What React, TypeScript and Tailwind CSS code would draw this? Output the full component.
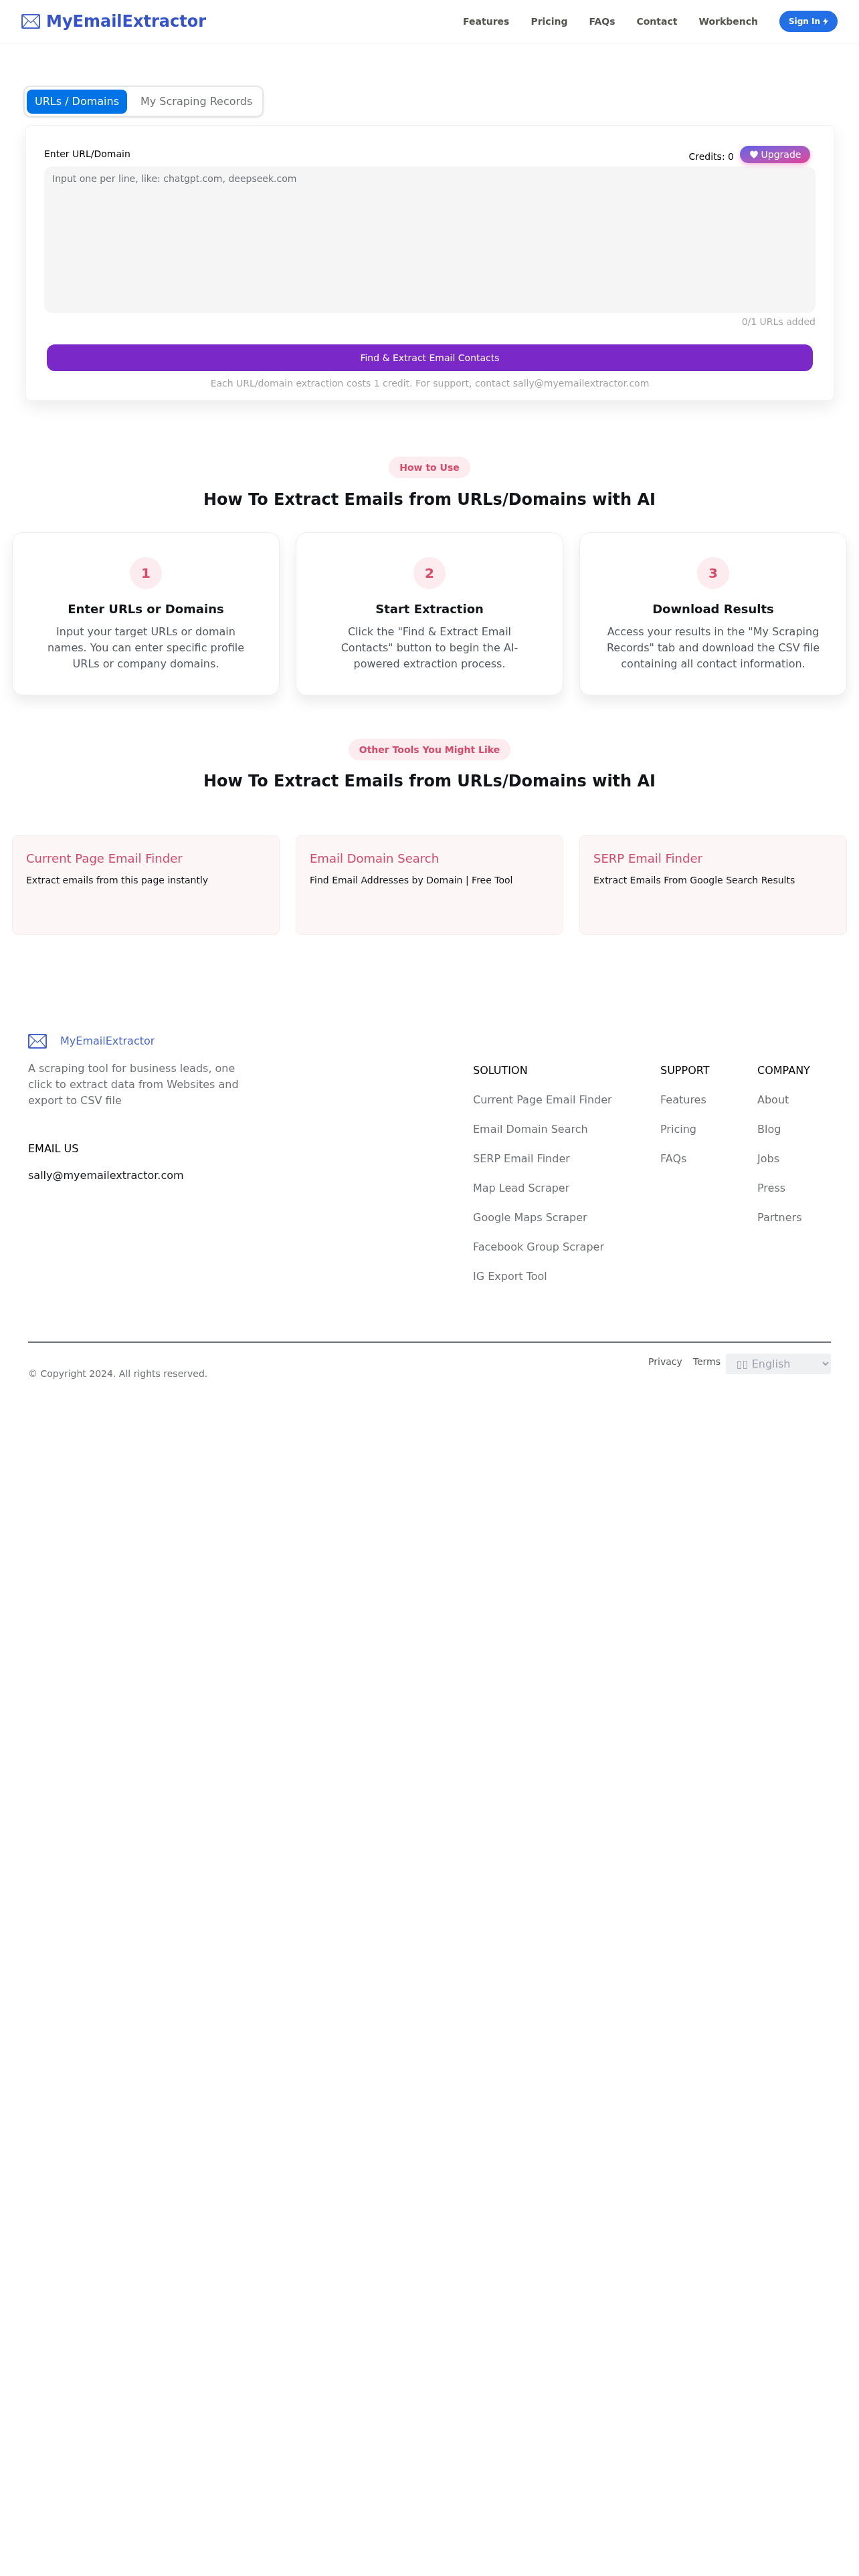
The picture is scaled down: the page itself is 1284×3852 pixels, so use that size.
import React from "react";

const steps = [
	{
		n: "1",
		title: "Enter URLs or Domains",
		lines: ["Input your target URLs or domain", "names. You can enter specific profile", "URLs or company domains."],
	},
	{
		n: "2",
		title: "Start Extraction",
		lines: ['Click the "Find & Extract Email', 'Contacts" button to begin the AI-', "powered extraction process."],
	},
	{
		n: "3",
		title: "Download Results",
		lines: ['Access your results in the "My Scraping', 'Records" tab and download the CSV file', "containing all contact information."],
	},
];

const tools = [
	{ title: "Current Page Email Finder", text: "Extract emails from this page instantly" },
	{ title: "Email Domain Search", text: "Find Email Addresses by Domain | Free Tool" },
	{ title: "SERP Email Finder", text: "Extract Emails From Google Search Results" },
];

const solution = [
	"Current Page Email Finder",
	"Email Domain Search",
	"SERP Email Finder",
	"Map Lead Scraper",
	"Google Maps Scraper",
	"Facebook Group Scraper",
	"IG Export Tool",
];

function MailIcon({ className }: { className: string }) {
	return (
		<svg viewBox="0 0 28 22" fill="none" stroke="#4463cc" className={className}>
			<rect x="1" y="1" width="26" height="20" rx="1" strokeWidth="2" />
			<path d="M1.500 1.500 14 13 26.500 1.500M1.500 20.500 10.500 9.500M26.500 20.500 17.500 9.500" strokeWidth="1.200" />
		</svg>
	);
}

function Column({ title, links, className }: { title: string; links: string[]; className: string }) {
	return (
		<div className={className}>
			<p className="text-base leading-6 text-black mb-5">{title}</p>
			<ul className="flex flex-col gap-5">
				{links.map((l) => (
					<li key={l} className="text-base leading-6 text-[#6e7177]">
						{l}
					</li>
				))}
			</ul>
		</div>
	);
}

export default function App() {
	return (
		<div className="w-full bg-white font-['DejaVu_Sans',sans-serif] text-[#12161a] will-change-transform">
			<nav className="h-[65px] border-b border-[#f3f3f3] flex items-center justify-between px-8">
				<div className="flex items-center gap-[9px]">
					<MailIcon className="w-7 h-[22px]" />
					<span className="text-2xl font-bold text-[#3453cc]">MyEmailExtractor</span>
				</div>
				<div className="flex items-center gap-8 text-sm font-bold text-[#57534e]">
					<span>Features</span>
					<span>Pricing</span>
					<span>FAQs</span>
					<span>Contact</span>
					<span>Workbench</span>
					<button className="h-8 w-[87px] rounded-full bg-[#2370e6] text-white text-xs font-bold flex items-center justify-center gap-1">
						Sign In
						<svg viewBox="0 0 10 14" className="w-2 h-3 fill-white">
							<path d="M6 0 0 8h4l-1 6 7-9H5.500z" />
						</svg>
					</button>
				</div>
			</nav>

			<main className="pl-[38px] pr-[37px] pt-[63px]">
				<div className="flex w-fit items-center h-[47px] px-[3px] border-2 border-[#e5e5e5] rounded-[10px] -ml-[3px] shadow-sm">
					<div className="h-9 w-[150px] rounded-lg bg-[#0073e6] text-white flex items-center justify-center text-base">
						URLs / Domains
					</div>
					<div className="pl-5 pr-3 text-base text-[#6e7177]">My Scraping Records</div>
				</div>

				<section className="mt-3 h-[412px] rounded-lg bg-white border border-[#f3f3f3] shadow-[0_10px_25px_rgba(0,0,0,0.08)] px-[27px] pt-[29px]">
					<div className="flex items-start justify-between h-[32px]">
						<label className="text-sm leading-6 text-black mt-[1px]">Enter URL/Domain</label>
						<div className="flex items-center gap-[9px] text-sm text-black">
							<span className="mt-[7px]">Credits: 0</span>
							<button className="h-[26px] w-[105px] mr-2 rounded-full bg-gradient-to-br from-[#5f5fe8] to-[#e0409a] text-white flex items-center justify-center gap-1 shadow-[0_3px_6px_rgba(224,64,154,0.35)]">
								<svg viewBox="0 0 24 24" className="w-[14px] h-[14px] fill-white">
									<path d="M12 22C5 16 2 12.500 2 8.500 2 5 4.700 2.500 7.500 2.500c1.900 0 3.500 1 4.500 2.700 1-1.700 2.600-2.700 4.500-2.700C19.300 2.500 22 5 22 8.500c0 4-3 7.500-10 13.500z" />
								</svg>
								Upgrade
							</button>
						</div>
					</div>
					<textarea
						placeholder="Input one per line, like: chatgpt.com, deepseek.com"
						className="block w-full h-[219px] rounded-xl bg-[#f5f5f5] px-3 py-2 text-sm placeholder:text-[#6e7177] resize-none"
					/>
					<p className="text-right text-sm leading-5 mt-[3px] text-[#a3a3a3]">0/1 URLs added</p>
					<button className="block mt-6 mx-1 w-[calc(100%-8px)] h-10 rounded-xl bg-[#7b28c9] text-white text-sm">
						Find &amp; Extract Email Contacts
					</button>
					<p className="text-center text-sm leading-5 mt-2 text-[#a3a3a3]">
						Each URL/domain extraction costs 1 credit. For support, contact sally@myemailextractor.com
					</p>
				</section>
			</main>

			<section className="px-[18px] pt-[84px]">
				<div className="flex flex-col items-center">
					<span className="h-8 px-4 rounded-full bg-[#fcecef] text-[#d94a68] text-sm font-bold flex items-center">
						How to Use
					</span>
					<h2 className="mt-4 text-2xl leading-8 font-bold">
						How To Extract Emails from URLs/Domains with AI
					</h2>
				</div>
				<div className="grid grid-cols-3 gap-6 mt-[33px]">
					{steps.map((s) => (
						<div
							key={s.n}
							className="h-[244px] rounded-2xl bg-white border border-[#eeeeee] shadow-[0_10px_20px_rgba(0,0,0,0.08)] pt-9 flex flex-col items-center text-center"
						>
							<div className="w-12 h-12 rounded-full bg-[#fcecef] text-[#d94a68] text-xl font-bold flex items-center justify-center">
								{s.n}
							</div>
							<h3 className="mt-4 text-lg leading-7 font-bold">{s.title}</h3>
							<p className="mt-2 text-base leading-6 text-[#525860]">
								{s.lines.map((l) => (
									<span key={l} className="block">
										{l}
									</span>
								))}
							</p>
						</div>
					))}
				</div>
			</section>

			<section className="px-[18px] pt-[65px]">
				<div className="flex flex-col items-center">
					<span className="h-8 px-4 rounded-full bg-[#fcecef] text-[#d94a68] text-sm font-bold flex items-center">
						Other Tools You Might Like
					</span>
					<h2 className="mt-[15px] text-2xl leading-8 font-bold">
						How To Extract Emails from URLs/Domains with AI
					</h2>
				</div>
				<div className="grid grid-cols-3 gap-6 mt-[65px]">
					{tools.map((t) => (
						<div key={t.title} className="h-[149px] rounded-lg bg-[#fdf6f7] border border-[#f8ecee] px-5 pt-5">
							<h3 className="text-lg leading-7 text-[#d54a6a]">{t.title}</h3>
							<p className="mt-[8px] text-sm leading-5">{t.text}</p>
						</div>
					))}
				</div>
			</section>

			<footer className="px-[42px] pt-[147px] pb-10">
				<div className="flex">
					<div className="w-[320px]">
						<div className="flex items-center h-[24px] gap-5">
							<MailIcon className="w-7 h-[22px]" />
							<span className="text-base text-[#4463cc]">MyEmailExtractor</span>
						</div>
						<p className="mt-[17px] text-base leading-6 text-[#6e7177]">
							A scraping tool for business leads, one click to extract data from Websites and export to CSV file
						</p>
						<p className="mt-[48px] text-base leading-6 text-black">EMAIL US</p>
						<p className="mt-4 text-base leading-6">sally@myemailextractor.com</p>
					</div>
					<div className="flex ml-[345px] pt-[44px]">
						<Column title="SOLUTION" links={solution} className="w-[280px]" />
						<Column title="SUPPORT" links={["Features", "Pricing", "FAQs"]} className="w-[145px]" />
						<Column title="COMPANY" links={["About", "Blog", "Jobs", "Press", "Partners"]} className="w-[110px]" />
					</div>
				</div>
				<div className="mt-[85px] border-t-2 border-[#6e7177] flex items-start justify-between pt-4">
					<p className="text-sm leading-5 mt-5 text-[#6e7177]">© Copyright 2024. All rights reserved.</p>
					<div className="flex items-start gap-4 text-sm leading-5 text-[#525860]">
						<span className="mt-[2px]">Privacy</span>
						<span className="mt-[2px] -mr-2">Terms</span>
						<select
							disabled
							className="w-[157px] h-[31px] rounded bg-[#eff0f2] text-base text-[#9ca3af] pl-3"
						>
							<option>▯▯ English</option>
						</select>
					</div>
				</div>
			</footer>
		</div>
	);
}
